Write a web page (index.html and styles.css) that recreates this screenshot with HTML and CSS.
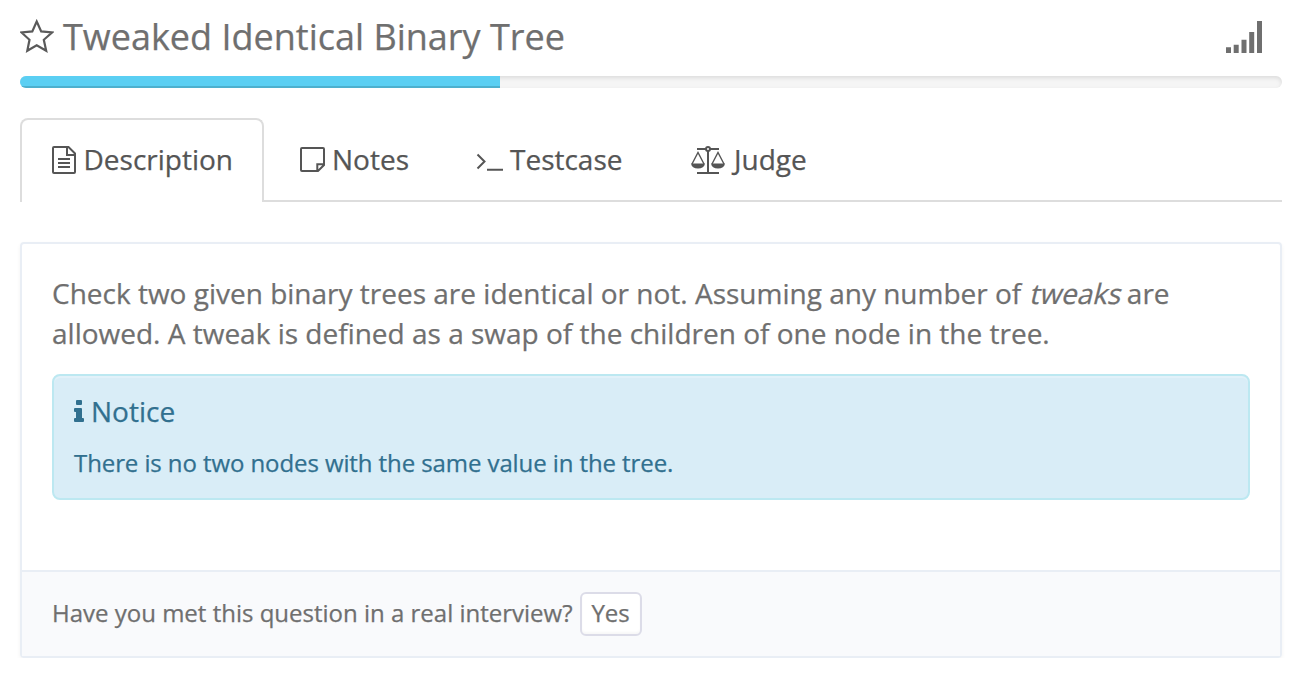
FILE: index.html
```html
<!DOCTYPE html>
<html lang="en">
<head>
<meta charset="utf-8">
<title>Tweaked Identical Binary Tree</title>
<link rel="stylesheet" href="styles.css">
</head>
<body>
<header class="header">
  <svg class="star" width="34" height="34" viewBox="0 0 34 34"><path d="M16.7 2.500 21.200 12.400l10.800 1.100-8.200 7.300 2.400 11L16.700 26.300 7.300 31.800l2.200-11L1.500 13.500l10.800-1.100z"/></svg>
  <h1 class="title">Tweaked Identical Binary Tree</h1>
  <svg class="signal" width="36" height="32" viewBox="0 0 36 32"><path d="M0 26.300h5V32H0zM7.700 23.700h5V32h-5zM15.500 18.700h5V32h-5zM23.200 11h5v21h-5zM31 0h5v32h-5z"/></svg>
</header>
<div class="progress"><div class="progress-bar"></div></div>
<nav class="tabs">
  <a class="tab active">
    <svg class="icon file" width="24" height="28" viewBox="0 0 24 28"><path d="M2 1h14.500L23 7.500V26a1 1 0 0 1-1 1H2a1 1 0 0 1-1-1V2a1 1 0 0 1 1-1zM15 1v8h8M6 13h12M6 17h12M6 21h12"/></svg>
    <span class="label description">Description</span>
  </a>
  <a class="tab notes-tab">
    <svg class="icon note" width="25" height="25" viewBox="0 0 25 25"><path d="M2 1h21a1 1 0 0 1 1 1v16l-6 6H2a1 1 0 0 1-1-1V2a1 1 0 0 1 1-1zM17.300 24v-6.700H24"/></svg>
    <span class="label notes">Notes</span>
  </a>
  <a class="tab test-tab">
    <svg class="icon prompt" width="27" height="18" viewBox="0 0 27 18"><path d="m1.500 1.500 7 7-7 7M11 16.700h16"/></svg>
    <span class="label testcase">Testcase</span>
  </a>
  <a class="tab judge-tab">
    <svg class="icon scales" width="34" height="28" viewBox="0 0 34 28"><path d="M6 3h22M17 3v24M6 27h22"/><path class="strings" d="M1 18 7 6.500 13 18M21 18l6-11.500L33 18"/><circle cx="17" cy="3" r="2"/><path class="pan" d="M0 17.500h14c-.5 3.300-3 5-7 5s-6.500-1.700-7-5zM20 17.500h14c-.5 3.300-3 5-7 5s-6.500-1.700-7-5z"/></svg>
    <span class="label judge">Judge</span>
  </a>
</nav>
<main class="panel">
  <section class="panel-body">
    <p class="text">Check two given binary trees are identical or not. Assuming any number of <em>tweaks</em> are<br>allowed. A tweak is defined as a swap of the children of one node in the tree.</p>
    <div class="alert">
      <div class="alert-title"><svg class="info" width="10" height="22" viewBox="0 0 10 22"><path d="M3 0h4q1 0 1 1v3q0 1-1 1H3Q2 5 2 4V1q0-1 1-1zM1 8h6q1 0 1 1v9h1q1 0 1 1v2q0 1-1 1H1q-1 0-1-1v-2q0-1 1-1h1v-6H1q-1 0-1-1V9q0-1 1-1z"/></svg><span>Notice</span></div>
      <p class="alert-text">There is no two nodes with the same value in the tree.</p>
    </div>
  </section>
  <footer class="panel-footer"><span class="question">Have you met this question in a real interview?</span><button class="yes">Yes</button></footer>
</main>
</body>
</html>
```
FILE: styles.css
```css
* { box-sizing: border-box; }
body { margin: 0; padding: 12px 16px 0 20px; background: #fff; color: #6f6f6f; font-family: "Open Sans", sans-serif; font-size: 28px; -webkit-text-stroke: .25px; }
svg { flex: none; }
p { margin: 0; }
.header { display: flex; align-items: center; height: 50px; padding-right: 20px; }
.star { fill: none; stroke: #5a5a5a; stroke-width: 2.2; margin-top: -2px; }
.title { margin: 0 auto 0 9px; font-size: 36px; font-weight: 400; line-height: 50px; white-space: nowrap; }
.signal { fill: #6f6f6f; margin-top: -1px; }
.progress { height: 12px; margin-top: 14px; border-radius: 6px; background: #f5f5f5; box-shadow: inset 0 2px 4px rgba(0,0,0,.1); overflow: hidden; }
.progress-bar { width: 480px; height: 12px; background: #5bcff3; box-shadow: inset 0 -2px 0 rgba(0,0,0,.15); }
.tabs { display: flex; height: 84px; margin-top: 30px; border-bottom: 2px solid #ddd; color: #555; }
.tab { display: flex; align-items: center; height: 84px; white-space: nowrap; }
.tab.active { width: 244px; padding: 0 0 2px 30px; border: 2px solid #ddd; border-bottom: 0; border-radius: 8px 8px 0 0; background: #fff; }
.icon { fill: none; stroke: #555; stroke-width: 2; }
.label { margin-left: 7px; line-height: 40px; margin-top: -2px; }
.description { margin-left: 7.5px; }
.file { margin-top: -1px; }
.note { margin-top: -1px; }
.notes-tab { margin-left: 36px; }
.notes { margin-left: 7px; }
.test-tab { margin-left: 67px; }
.prompt { margin-top: 3px; }
.testcase { margin-left: 7px; }
.judge-tab { margin-left: 68px; }
.judge { margin-left: 9.5px; }
.scales .strings { stroke-width: 1.4; }
.scales .pan { fill: #555; stroke: none; }
.scales circle { fill: #fff; }
.panel { height: 416px; margin-top: 40px; border: 2px solid #e9eef5; border-radius: 4px; box-shadow: 0 2px 4px rgba(0,0,0,.05); display: flex; flex-direction: column; }
.panel-body { flex: 1; padding: 29px 30px 0; }
.text { line-height: 40px; white-space: nowrap; }
.text em { display: inline-block; font-style: normal; transform: skewX(-14deg); transform-origin: 50% 75%; }
.alert { height: 126px; margin-top: 21px; padding: 15px 20px; border: 2px solid #bce8f1; border-radius: 8px; background: #d9edf7; color: #31708f; box-shadow: inset 0 2px 0 rgba(255,255,255,.25); }
.alert-title { display: flex; align-items: center; gap: 7px; height: 40px; line-height: 40px; }
.info { fill: #31708f; }
.alert-text { margin-top: 14px; font-size: 24px; line-height: 36px; letter-spacing: -.09px; }
.panel-footer { display: flex; align-items: center; height: 86px; padding: 0 30px; border-top: 2px solid #e9eef5; background: #f9fafc; font-size: 24px; white-space: nowrap; }
.question { margin-top: -4px; }
.yes { width: 62px; height: 44px; margin-left: 7px; padding: 0 0 4px; border: 2px solid #dcdce8; border-radius: 6px; background: #fff; box-shadow: inset 0 -2px 2px rgba(0,0,0,.03); color: #6f6f6f; font: 24px "Open Sans", sans-serif; }
```
